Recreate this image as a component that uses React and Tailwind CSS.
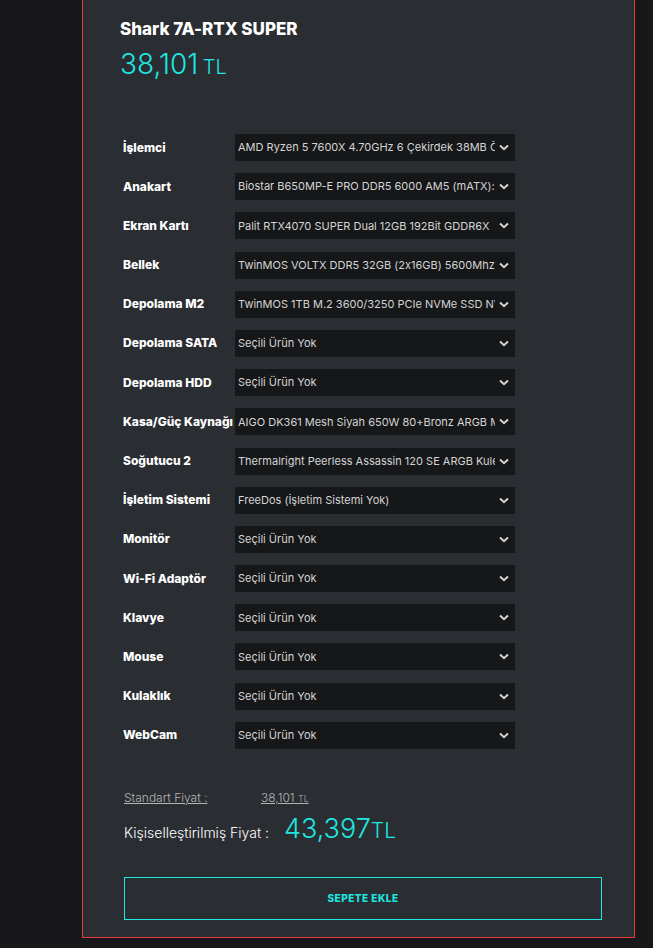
import React from "react";

const parts = [
  { label: "İşlemci", value: "AMD Ryzen 5 7600X 4.70GHz 6 Çekirdek 38MB Önbellek AM5 İşlemci" },
  { label: "Anakart", value: "Biostar B650MP-E PRO DDR5 6000 AM5 (mATX): - 0 TL" },
  { label: "Ekran Kartı", value: "Palit RTX4070 SUPER Dual 12GB 192Bit GDDR6X" },
  { label: "Bellek", value: "TwinMOS VOLTX DDR5 32GB (2x16GB) 5600Mhz CL40" },
  { label: "Depolama M2", value: "TwinMOS 1TB M.2 3600/3250 PCIe NVMe SSD NVMe3" },
  { label: "Depolama SATA", value: "Seçili Ürün Yok" },
  { label: "Depolama HDD", value: "Seçili Ürün Yok" },
  { label: "Kasa/Güç Kaynağı", value: "AIGO DK361 Mesh Siyah 650W 80+Bronz ARGB Mid Tower" },
  { label: "Soğutucu 2", value: "Thermalright Peerless Assassin 120 SE ARGB Kule" },
  { label: "İşletim Sistemi", value: "FreeDos (İşletim Sistemi Yok)" },
  { label: "Monitör", value: "Seçili Ürün Yok" },
  { label: "Wi-Fi Adaptör", value: "Seçili Ürün Yok" },
  { label: "Klavye", value: "Seçili Ürün Yok" },
  { label: "Mouse", value: "Seçili Ürün Yok" },
  { label: "Kulaklık", value: "Seçili Ürün Yok" },
  { label: "WebCam", value: "Seçili Ürün Yok" },
];

const Chevron = () => (
  <svg width="10" height="7" viewBox="0 0 10 7" className="shrink-0">
    <path d="M1 1.5 L5 5.2 L9 1.5" fill="none" stroke="#d4d4d4" strokeWidth="2" />
  </svg>
);

const App = () => {
  return (
    <div
      className="min-h-[948px] bg-[#18181b] [font-feature-settings:'calt'_0]"
      style={{ fontFamily: "Inter, 'Noto Sans', sans-serif" }}
    >
      <div className="ml-[82px] w-[553px] border-x border-b border-[#e53935] bg-[#2a2d32] pt-[17px] pb-[17px]">
        <h1 className="pl-[37px] text-[17px] font-extrabold text-white leading-[24px]">
          Shark 7A-RTX SUPER
        </h1>
        <p className="pl-[37px] mt-[5px] text-[#1ee6e0] font-light leading-[36px]">
          <span className="text-[28px]">38,101</span>{" "}
          <span className="text-[20px]">TL</span>
        </p>

        <div className="mt-[48px] pl-[40px] flex flex-col gap-[12.2px]">
          {parts.map((p) => (
            <div key={p.label} className="flex items-center">
              <span className="w-[112px] shrink-0 text-[12px] font-extrabold text-white whitespace-nowrap">
                {p.label}
              </span>
              <div className="w-[280px] h-[27px] bg-[#161719] flex items-center pl-[3px] pr-[6px]">
                <span className="flex-1 overflow-hidden whitespace-nowrap text-[11px] text-[#d4d4d4]">
                  {p.value}
                </span>
                <span className="ml-[4px]">
                  <Chevron />
                </span>
              </div>
            </div>
          ))}
        </div>

        <div className="mt-[40px] pl-[41px] flex items-baseline text-[12px] text-[#b5b5b5] font-light">
          <span className="w-[137px] underline">Standart Fiyat :</span>
          <span className="underline">
            38,101 <span className="text-[9px]">TL</span>
          </span>
        </div>

        <div className="mt-[2px] pl-[41px] flex items-baseline text-white">
          <span className="text-[14px] font-light">Kişiselleştirilmiş Fiyat :</span>
          <span className="ml-[15px] text-[27px] font-light text-[#1ee6e0]">43,397</span>
          <span className="text-[21px] font-light text-[#1ee6e0]">TL</span>
        </div>

        <div className="mt-[28px] ml-[41px] w-[478px] h-[43px] border border-[#1ee6e0] flex items-center justify-center">
          <span className="text-[10px] font-extrabold tracking-[0.5px] text-[#1ee6e0]">
            SEPETE EKLE
          </span>
        </div>
      </div>
    </div>
  );
};

export default App;
